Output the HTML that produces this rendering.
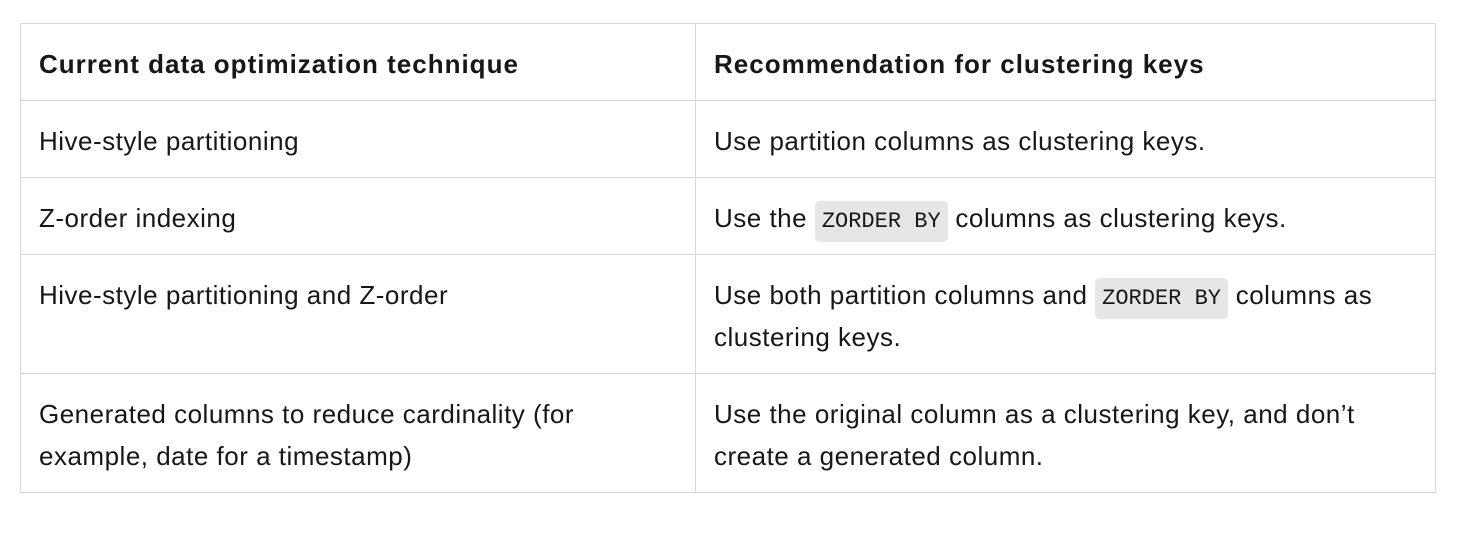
<!DOCTYPE html>
<html><head><meta charset="utf-8"><style>
html,body{margin:0;padding:0;background:#fff;width:1464px;height:540px;overflow:hidden}
body{font-family:"Liberation Sans",sans-serif;color:#171717;font-size:26px;letter-spacing:0.5px}
table{position:absolute;left:20px;top:23px;width:1416px;border-collapse:collapse;border:1px solid #d6d6d6}
td,th{border:1px solid #d6d6d6;padding:19px 18px 15px 18px;line-height:42px;text-align:left;vertical-align:top}
th{font-weight:bold;letter-spacing:1px}
td:first-child,th:first-child{width:638px}
code{font-family:"Liberation Mono",monospace;font-size:22px;letter-spacing:0;background:#e6e6e6;border-radius:5px;padding:8px 7px;line-height:1}
</style></head><body>
<table>
<tr><th>Current data optimization technique</th><th>Recommendation for clustering keys</th></tr>
<tr><td>Hive-style partitioning</td><td>Use partition columns as clustering keys.</td></tr>
<tr><td>Z-order indexing</td><td>Use the <code>ZORDER BY</code> columns as clustering keys.</td></tr>
<tr><td>Hive-style partitioning and Z-order</td><td>Use both partition columns and <code>ZORDER BY</code> columns as clustering keys.</td></tr>
<tr><td>Generated columns to reduce cardinality (for example, date for a timestamp)</td><td>Use the original column as a clustering key, and don’t create a generated column.</td></tr>
</table>
</body></html>
